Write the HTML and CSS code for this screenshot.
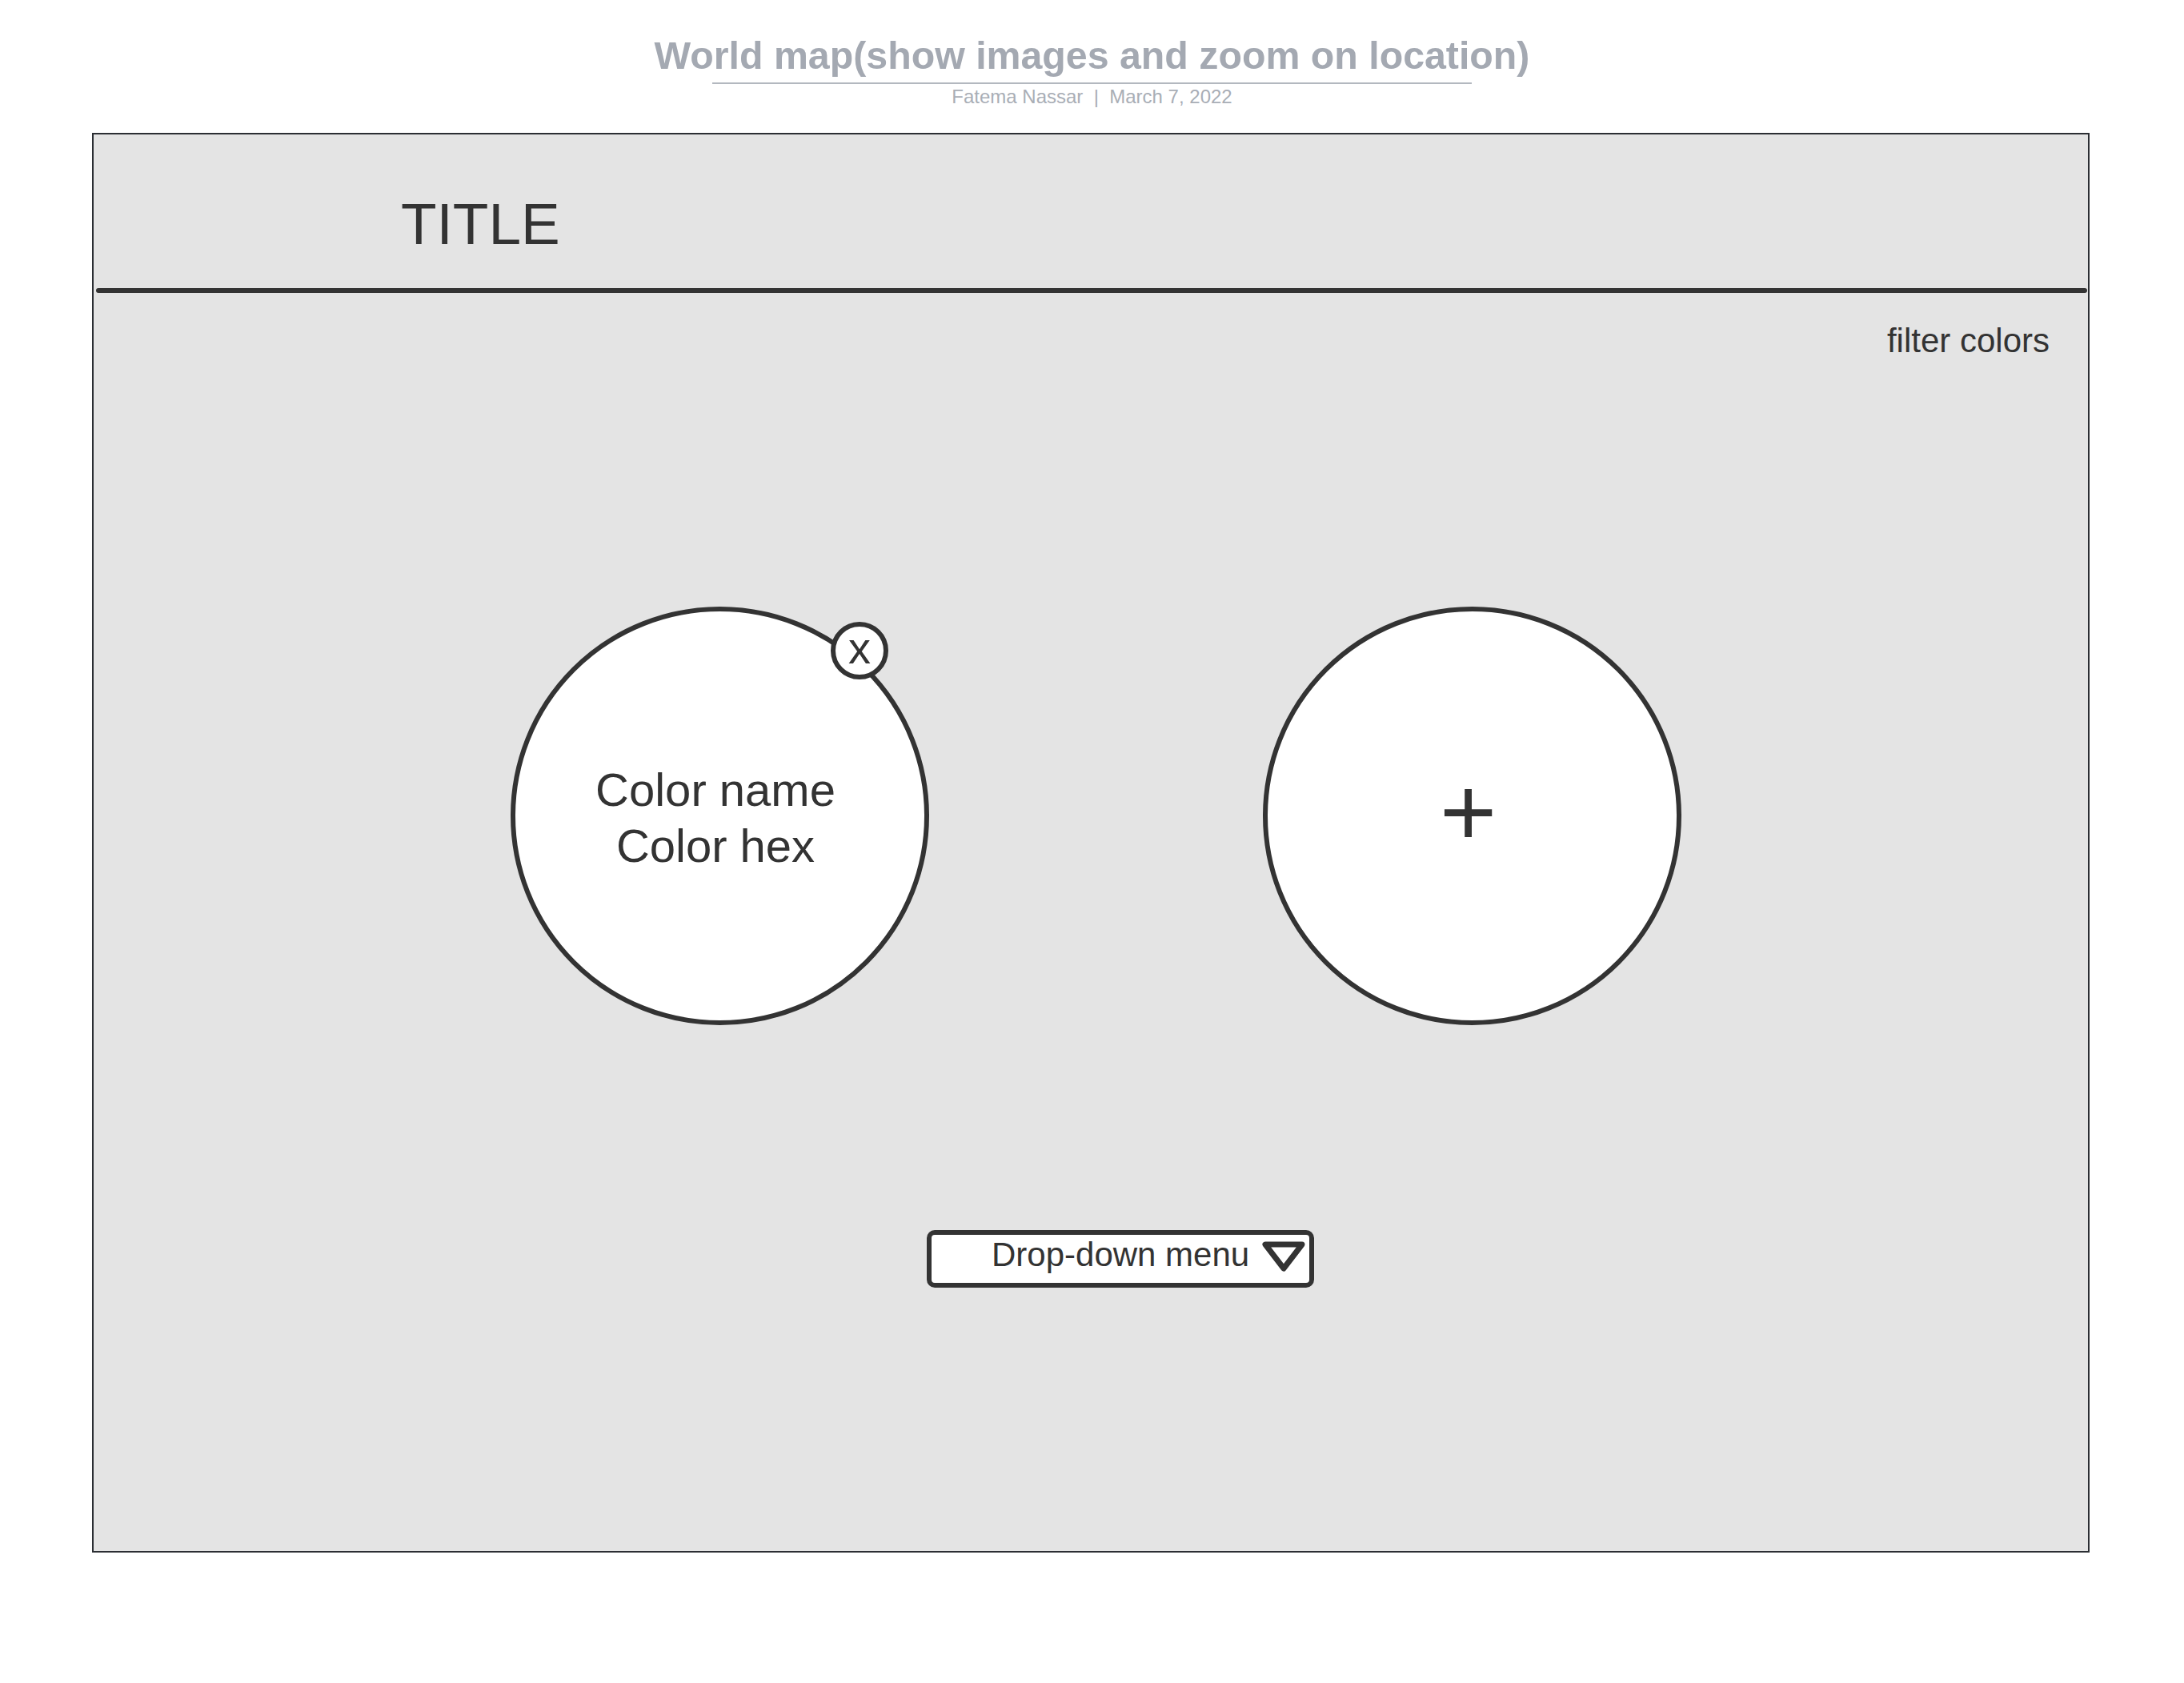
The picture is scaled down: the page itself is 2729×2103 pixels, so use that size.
FILE: index.html
```html
<!DOCTYPE html>
<html lang="en">
<head>
<meta charset="utf-8">
<title>World map(show images and zoom on location)</title>
<link rel="stylesheet" href="styles.css">
</head>
<body>
<header class="doc-head">
  <h1 class="doc-title">World map(show images and zoom on location)</h1>
  <div class="doc-rule"></div>
  <div class="doc-meta">Fatema Nassar&nbsp;&nbsp;|&nbsp;&nbsp;March 7, 2022</div>
</header>

<main class="frame">
  <div class="titlebar">
    <div class="app-title">TITLE</div>
  </div>
  <div class="divider"></div>
  <div class="filter-row">filter colors</div>

  <div class="swatches">
    <div class="swatch">
      <div class="swatch-text">Color name<br>Color hex</div>
      <div class="close-badge">x</div>
    </div>
    <div class="swatch swatch-add">
      <div class="add-sign">+</div>
    </div>
  </div>

  <div class="dropdown">
    <span class="dropdown-label">Drop-down menu</span>
    <svg class="dropdown-caret" width="56" height="40" viewBox="0 0 56 40">
      <path d="M5 5 H51 L28 35 Z" fill="none" stroke="#333333" stroke-width="7" stroke-linejoin="round"/>
    </svg>
  </div>
</main>
</body>
</html>
```

FILE: styles.css
```css
html, body {
  margin: 0;
  padding: 0;
  background: #ffffff;
}

body {
  font-family: "Liberation Sans", Arial, sans-serif;
  color: #333333;
}

.doc-head {
  height: 166px;
  box-sizing: border-box;
  padding-top: 41px;
  display: flex;
  flex-direction: column;
  align-items: center;
}

.doc-title {
  margin: 0;
  font-size: 48.3px;
  line-height: 56px;
  font-weight: 700;
  color: #a4a9b2;
  white-space: nowrap;
}

.doc-rule {
  width: 949px;
  height: 2px;
  margin-top: 6px;
  background: #b3b8bf;
}

.doc-meta {
  margin-top: 1px;
  font-size: 24px;
  line-height: 30px;
  color: #a9aeb6;
  white-space: nowrap;
}

.frame {
  display: block;
  margin-left: 115px;
  width: 2496px;
  height: 1774px;
  box-sizing: border-box;
  border: 2px solid #2b2e33;
  background: #e4e4e4;
}

.titlebar {
  height: 192px;
  box-sizing: border-box;
  padding-top: 72px;
  padding-left: 384px;
}

.app-title {
  font-size: 73px;
  line-height: 80px;
  color: #333333;
}

.divider {
  height: 6px;
  margin-left: 3px;
  margin-right: 1px;
  border-radius: 3px;
  background: #333333;
}

.filter-row {
  margin-top: 36px;
  padding-right: 48px;
  text-align: right;
  font-size: 42px;
  line-height: 48px;
  color: #333333;
}

.swatches {
  display: flex;
  gap: 417px;
  margin-top: 308px;
  padding-left: 521px;
}

.swatch {
  position: relative;
  width: 523px;
  height: 523px;
  box-sizing: border-box;
  border: 6px solid #333333;
  border-radius: 50%;
  background: #ffffff;
  display: flex;
  align-items: center;
  justify-content: center;
}

.swatch-text {
  padding-top: 5px;
  padding-right: 11px;
  text-align: center;
  font-size: 58px;
  line-height: 70px;
  color: #333333;
}

.close-badge {
  position: absolute;
  left: 394px;
  top: 13px;
  width: 72px;
  height: 72px;
  box-sizing: border-box;
  border: 6px solid #333333;
  border-radius: 50%;
  background: #ffffff;
  display: flex;
  align-items: center;
  justify-content: center;
  font-size: 56px;
  line-height: 1;
  padding-bottom: 6px;
  color: #333333;
}

.add-sign {
  padding-right: 10px;
  padding-bottom: 10px;
  font-size: 122px;
  line-height: 122px;
  color: #333333;
}

.dropdown {
  display: flex;
  align-items: flex-start;
  width: 484px;
  height: 72px;
  box-sizing: border-box;
  margin-top: 256px;
  margin-left: 1041px;
  padding-top: 1px;
  padding-left: 75px;
  border: 6px solid #333333;
  border-radius: 10px;
  background: #ffffff;
}

.dropdown-label {
  font-size: 42px;
  line-height: 48px;
  color: #333333;
  white-space: nowrap;
}

.dropdown-caret {
  margin-left: 15px;
  margin-top: 6px;
  flex: none;
}
```
